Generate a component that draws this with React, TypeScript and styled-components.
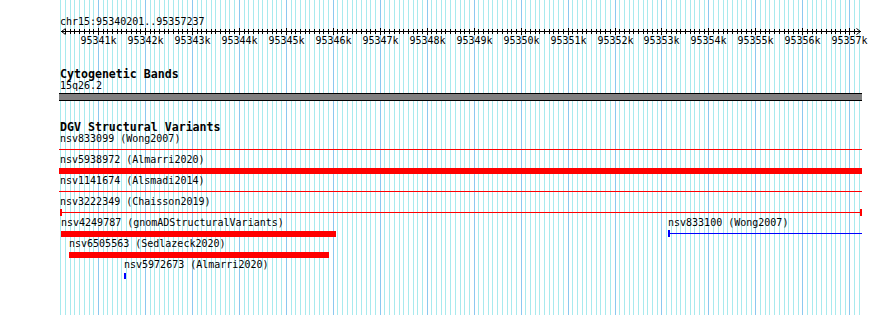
import React from 'react';
import styled, { createGlobalStyle } from 'styled-components';

const START = 95340201;
const END = 95357237;
const X0 = 60.95;
const SPAN = 800;
const SCALE = SPAN / (END - START);
const bpToX = (bp: number) => X0 + (bp - START) * SCALE;

const GlobalStyle = createGlobalStyle`
  html, body { margin: 0; padding: 0; background: #ffffff; }
  body { font-family: "DejaVu Sans Mono", "Liberation Mono", monospace; color: #000; }
`;

const Page = styled.div`
  position: relative;
  width: 890px;
  height: 315px;
  overflow: hidden;
  background: #ffffff;
`;

const GridLayer = styled.svg`
  position: absolute;
  left: 0;
  top: 0;
  shape-rendering: crispEdges;
`;

const Content = styled.div`
  position: relative;
  display: flex;
  flex-direction: column;
`;

const Section = styled.section<{ $top: number }>`
  display: flex;
  flex-direction: column;
  margin-top: ${(p) => p.$top}px;
`;

const SmallText = styled.div<{ $lh?: number }>`
  font-family: "DejaVu Sans Mono", "Liberation Mono", monospace;
  font-size: 10px;
  line-height: ${(p) => p.$lh ?? 13}px;
  height: ${(p) => p.$lh ?? 13}px;
  padding-left: 60px;
  white-space: nowrap;
  color: #000;
`;

const TrackTitle = styled.h2<{ $lh: number }>`
  margin: 0;
  font-family: "DejaVu Sans Mono", "Liberation Mono", monospace;
  font-weight: bold;
  font-size: 11.6px;
  line-height: ${(p) => p.$lh}px;
  height: ${(p) => p.$lh}px;
  padding-left: 60px;
  white-space: nowrap;
  color: #000;
`;

const RulerSvg = styled.svg`
  display: block;
  shape-rendering: crispEdges;
`;

const BandBar = styled.div`
  margin-top: 2px;
  margin-left: 59px;
  width: 803px;
  height: 8px;
  box-sizing: border-box;
  border-top: 1px solid #000;
  border-bottom: 1px solid #000;
  background: #808080;
`;

const Row = styled.div`
  position: relative;
  height: 21px;
`;

const Feature = styled.div`
  position: absolute;
  top: 0;
  display: flex;
  flex-direction: column;
`;

const FeatureLabel = styled.span`
  font-family: "DejaVu Sans Mono", "Liberation Mono", monospace;
  font-size: 10px;
  line-height: 11px;
  height: 11px;
  white-space: nowrap;
  color: #000;
`;

const Glyph = styled.div`
  position: relative;
  height: 10px;
`;

const ThinLine = styled.div<{ $color: string }>`
  position: absolute;
  left: 0;
  right: 0;
  top: 5px;
  height: 1px;
  background: ${(p) => p.$color};
`;

const ThickBar = styled.div<{ $color: string }>`
  position: absolute;
  left: 0;
  right: 0;
  top: 3px;
  height: 6px;
  background: ${(p) => p.$color};
`;

const Cap = styled.div<{ $color: string; $side: 'left' | 'right' }>`
  position: absolute;
  ${(p) => p.$side}: 0;
  top: 2px;
  width: 2px;
  height: 7px;
  background: ${(p) => p.$color};
`;

type Glyphs = 'line' | 'bar';
interface Feat {
  name: string;
  left: number;
  right: number;
  labelLeft?: number;
  kind: Glyphs;
  color: string;
  capL?: boolean;
  capR?: boolean;
}

const RED = '#ff0000';
const BLUE = '#0000ff';

const rows: Feat[][] = [
  [{ name: 'nsv833099 (Wong2007)', left: 59, right: 862, labelLeft: 60, kind: 'line', color: RED }],
  [{ name: 'nsv5938972 (Almarri2020)', left: 59, right: 862, labelLeft: 60, kind: 'bar', color: RED }],
  [{ name: 'nsv1141674 (Alsmadi2014)', left: 59, right: 862, labelLeft: 60, kind: 'line', color: RED }],
  [{ name: 'nsv3222349 (Chaisson2019)', left: 60, right: 862, kind: 'line', color: RED, capL: true, capR: true }],
  [
    { name: 'nsv4249787 (gnomADStructuralVariants)', left: 61, right: 336, kind: 'bar', color: RED },
    { name: 'nsv833100 (Wong2007)', left: 668, right: 862, kind: 'line', color: BLUE, capL: true },
  ],
  [{ name: 'nsv6505563 (Sedlazeck2020)', left: 69, right: 329, kind: 'bar', color: RED }],
  [{ name: 'nsv5972673 (Almarri2020)', left: 124, right: 126, kind: 'bar', color: BLUE }],
];

const gridPositions = () => {
  const out: { x: number; major: boolean }[] = [];
  for (let bp = Math.floor(START / 100) * 100; bp <= END; bp += 100) {
    out.push({ x: Math.floor(bpToX(bp)), major: bp % 1000 === 0 });
  }
  return out;
};

const GRID = gridPositions();

const Grid: React.FC = () => (
  <GridLayer width={890} height={315}>
    {GRID.filter((g) => !g.major).map((g) => (
      <rect key={`m${g.x}`} x={g.x} y={0} width={1} height={315} fill="#a8eaee" />
    ))}
    {GRID.filter((g) => g.major).map((g) => (
      <rect key={`M${g.x}`} x={g.x} y={0} width={1} height={315} fill="#8cc8f0" />
    ))}
  </GridLayer>
);

const Ruler: React.FC = () => (
  <RulerSvg width={890} height={20}>
    <rect x={61} y={3} width={800} height={1} fill="#000" />
    <line x1={61.5} y1={3.5} x2={65.5} y2={0.5} stroke="#000" strokeWidth={1} shapeRendering="auto" />
    <line x1={61.5} y1={3.5} x2={65.5} y2={6.5} stroke="#000" strokeWidth={1} shapeRendering="auto" />
    <line x1={860.5} y1={3.5} x2={856.5} y2={0.5} stroke="#000" strokeWidth={1} shapeRendering="auto" />
    <line x1={860.5} y1={3.5} x2={856.5} y2={6.5} stroke="#000" strokeWidth={1} shapeRendering="auto" />
    {GRID.filter((g) => g.x > 62 && g.x < 858).map((g) => (
      <rect key={g.x} x={g.x} y={g.major ? 0 : 1} width={1} height={g.major ? 7 : 5} fill="#000" />
    ))}
    {GRID.filter((g) => g.major).map((g, i) => (
      <text
        key={`t${g.x}`}
        x={g.x + 0.5}
        y={16}
        textAnchor="middle"
        fontFamily='"DejaVu Sans Mono", "Liberation Mono", monospace'
        fontSize={10}
        fill="#000"
      >
        {`${95341 + i}k`}
      </text>
    ))}
  </RulerSvg>
);

const FeatureView: React.FC<{ f: Feat }> = ({ f }) => {
  const labelLeft = f.labelLeft ?? f.left;
  return (
    <Feature style={{ left: Math.min(labelLeft, f.left) }}>
      <FeatureLabel style={{ paddingLeft: labelLeft - Math.min(labelLeft, f.left) }}>{f.name}</FeatureLabel>
      <Glyph style={{ width: f.right - f.left, marginLeft: f.left - Math.min(labelLeft, f.left) }}>
        {f.kind === 'line' ? <ThinLine $color={f.color} /> : <ThickBar $color={f.color} />}
        {f.capL && <Cap $color={f.color} $side="left" />}
        {f.capR && <Cap $color={f.color} $side="right" />}
      </Glyph>
    </Feature>
  );
};

export default function App() {
  return (
    <Page>
      <GlobalStyle />
      <Grid />
      <Content>
        <Section $top={15}>
          <SmallText>chr15:95340201..95357237</SmallText>
          <Ruler />
        </Section>
        <Section $top={20}>
          <TrackTitle $lh={12}>Cytogenetic Bands</TrackTitle>
          <SmallText $lh={11}>15q26.2</SmallText>
          <BandBar />
        </Section>
        <Section $top={21}>
          <TrackTitle $lh={11}>DGV Structural Variants</TrackTitle>
          {rows.map((r, i) => (
            <Row key={i}>
              {r.map((f) => (
                <FeatureView key={f.name} f={f} />
              ))}
            </Row>
          ))}
        </Section>
      </Content>
    </Page>
  );
}
